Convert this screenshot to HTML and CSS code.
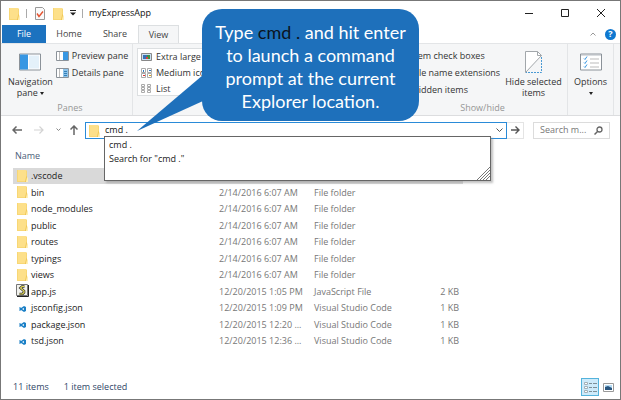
FILE: index.html
```html
<!DOCTYPE html>
<html lang="en">
<head>
<meta charset="utf-8">
<title>myExpressApp</title>
<link rel="stylesheet" href="styles.css">
</head>
<body>
<svg class="defs" aria-hidden="true">
  <symbol id="folder" viewBox="0 0 11 13">
    <path d="M0 1h9l1 1v11H0z" fill="#f8d775"/>
    <path d="M1 1h8v11H1z" fill="#fde08a"/>
    <path d="M9 8l1-1v6H8z" fill="#f0c552"/>
    <path d="M10 8l1 1v4h-2z" fill="#fff0b8"/>
  </symbol>
  <symbol id="code" viewBox="0 0 7 6">
    <path d="M5 0l2 1v4L5 6 2 4 1 5 0 4l1-1-1-1 1-1 1 1z" fill="#1c80c6"/>
    <path d="M5 2v2L3 3z" fill="#fff"/>
  </symbol>
</svg>
<div class="window">
  <header class="titlebar">
    <svg class="folder" aria-hidden="true"><use href="#folder"/></svg>
    <span class="rule"></span>
    <svg class="check" width="10" height="13" viewBox="0 0 10 13" aria-hidden="true"><path d="M.5.5h7l2 2v10h-9z" fill="#fafafa" stroke="#999"/><path d="M2 6.500l2 3 4-5" fill="none" stroke="#e55330" stroke-width="1.400"/></svg>
    <svg class="folder" aria-hidden="true"><use href="#folder"/></svg>
    <svg width="6" height="6" viewBox="0 0 6 6" aria-hidden="true"><path d="M0 0h6v1H0zM0 2.500h6L3 5.500z" fill="#222"/></svg>
    <span class="rule last"></span>
    <h1>myExpressApp</h1>
    <div class="controls">
      <button aria-label="Minimize"><svg width="8" height="8" viewBox="0 0 8 8"><path d="M0 4.500h8" stroke="#222"/></svg></button>
      <button aria-label="Maximize"><svg width="8" height="8" viewBox="0 0 8 8"><path d="M.5.5h7v7h-7z" fill="none" stroke="#222"/></svg></button>
      <button aria-label="Close"><svg width="8" height="8" viewBox="0 0 8 8"><path d="M0 0l8 8M8 0L0 8" stroke="#222"/></svg></button>
    </div>
  </header>
  <nav class="tabs">
    <button class="file">File</button>
    <button>Home</button>
    <button>Share</button>
    <button class="active">View</button>
    <svg class="collapse" width="6" height="4" viewBox="0 0 6 4" aria-hidden="true"><path d="M.5 3.500L3 1l2.500 2.500" fill="none" stroke="#999"/></svg>
    <button class="help" aria-label="Help">?</button>
  </nav>
  <section class="ribbon">
    <div class="group panes">
      <div class="tools">
        <button class="big"><svg width="22" height="17" viewBox="0 0 22 17" aria-hidden="true"><path d="M.5.5h21v16H.5z" fill="#fff" stroke="#8b9299"/><path d="M1 1h8v15H1z" fill="#3797e3"/><path d="M10 2h10v13H10z" fill="#e4f1fa"/></svg><span>Navigation<br>pane <i class="caret"></i></span></button>
        <div class="stack">
          <button><svg width="13" height="10" viewBox="0 0 13 10" aria-hidden="true"><path d="M.5.5h12v9H.5z" fill="#fff" stroke="#8b9299"/><path d="M3.500 1v8" stroke="#bbb"/><path d="M7 1h5v8H7z" fill="#3797e3"/></svg>Preview pane</button>
          <button><svg width="13" height="10" viewBox="0 0 13 10" aria-hidden="true"><path d="M.5.5h12v9H.5z" fill="#fff" stroke="#8b9299"/><path d="M3.500 1v8" stroke="#bbb"/><path d="M7 1h5v8H7z" fill="#8fc4ea"/><path d="M8 3.500h3M8 5.500h3M8 7.500h3" stroke="#3480b8"/></svg>Details pane</button>
        </div>
      </div>
      <div class="caption">Panes</div>
    </div>
    <div class="group layout">
      <div class="gallery">
        <button><svg width="13" height="10" viewBox="0 0 13 10" aria-hidden="true"><path d="M1.500 1.500h10v7h-10z" fill="#c9dff2" stroke="#888"/><path d="M3 3h4v4H3z" fill="#3a6fb5"/><path d="M7 3h3v4H7z" fill="#3d9141"/><path d="M6 5h2v2H6z" fill="#d9443c"/></svg>Extra large icons</button>
        <button><svg width="13" height="10" viewBox="0 0 13 10" aria-hidden="true"><path d="M1.500.5h4v4h-4zM7.500.5h4v4h-4zM1.500 5.500h4v4h-4zM7.500 5.500h4v4h-4z" fill="#fff" stroke="#aaa"/><path d="M3 2h1v2H3zM9 2h2v1H9z" fill="#3579bb"/><path d="M3 7h2v1H3z" fill="#d33"/><path d="M9 7h2v1H9z" fill="#d9a121"/></svg>Medium icons</button>
        <button><svg width="13" height="10" viewBox="0 0 13 10" aria-hidden="true"><path d="M1.500.5h3v2h-3zM1.500 3.500h3v2h-3zM1.500 6.500h3v2h-3zM7.500.5h3v2h-3zM7.500 3.500h3v2h-3zM7.500 6.500h3v2h-3z" fill="#fff" stroke="#aaa"/></svg>List</button>
      </div>
    </div>
    <div class="group show">
      <div class="tools">
        <div class="stack checks">
          <label><input type="checkbox">Item check boxes</label>
          <label><input type="checkbox">File name extensions</label>
          <label><input type="checkbox">Hidden items</label>
        </div>
        <button class="big"><svg width="18" height="22" viewBox="0 0 18 22" aria-hidden="true"><path d="M.5 21.500V.5h12l4 4z" fill="#fff"/><path d="M.5 21.500V.5h12l4 4L.5 21.500M12.500.5v4h4" fill="none" stroke="#a2a7ab"/><path d="M16.500 6v15.500H1" fill="none" stroke="#4a9ad4" stroke-dasharray="2 1"/></svg><span>Hide selected<br>items</span></button>
      </div>
      <div class="caption">Show/hide</div>
    </div>
    <div class="group options">
      <button class="big"><svg width="22" height="17" viewBox="0 0 22 17" aria-hidden="true"><path d="M.5.5h21v16H.5z" fill="#fff" stroke="#8b9299"/><path d="M1 1h20v1H1z" fill="#b5bbc0"/><path d="M4 5l1 1 2-3M4 9l1 1 2-3M4 13l1 1 2-3" fill="none" stroke="#3797e3"/><path d="M10 5.500h9M10 9.500h9M10 13.500h9" stroke="#bbb"/></svg><span>Options<br><i class="caret"></i></span></button>
    </div>
  </section>
  <div class="navigation">
    <button aria-label="Back"><svg width="10" height="8" viewBox="0 0 10 8"><path d="M10 4H1M4.500.5L1 4l3.500 3.500" fill="none" stroke="#666" stroke-width="1.500"/></svg></button>
    <button aria-label="Forward"><svg width="10" height="8" viewBox="0 0 10 8"><path d="M0 4h9M5.500.5L9 4 5.500 7.500" fill="none" stroke="#d3d3d3" stroke-width="1.200"/></svg></button>
    <button class="recent" aria-label="Recent"><svg width="5" height="4" viewBox="0 0 5 4"><path d="M.5.5l2 2 2-2" fill="none" stroke="#888"/></svg></button>
    <button aria-label="Up"><svg width="8" height="10" viewBox="0 0 8 10"><path d="M4 10V1M.5 4.500L4 1l3.500 3.500" fill="none" stroke="#666" stroke-width="1.500"/></svg></button>
    <div class="address">
      <svg class="folder" aria-hidden="true"><use href="#folder"/></svg>
      <input type="text" value="cmd ." aria-label="Address">
      <svg width="7" height="5" viewBox="0 0 7 5" aria-hidden="true"><path d="M.5.5l3 3 3-3" fill="none" stroke="#555"/></svg>
      <div class="suggestions">
        <a href="#">cmd .</a>
        <a href="#">Search for "cmd ."</a>
        <svg width="13" height="13" viewBox="0 0 13 13" aria-hidden="true"><path d="M0 13L13 0M3 13L13 3M6 13l7-7M9 13l4-4" stroke="#777"/></svg>
      </div>
    </div>
    <button class="go" aria-label="Go"><svg width="9" height="8" viewBox="0 0 9 8"><path d="M0 4h8M4.500.5L8 4 4.500 7.500" fill="none" stroke="#555" stroke-width="1.400"/></svg></button>
    <div class="search">
      <input type="text" placeholder="Search m..." aria-label="Search myExpressApp">
      <svg width="9" height="9" viewBox="0 0 9 9" aria-hidden="true"><circle cx="5.500" cy="3.500" r="2.500" fill="none" stroke="#666" stroke-width="1.300"/><path d="M4 5L.5 8.500" stroke="#666" stroke-width="1.500"/></svg>
    </div>
  </div>
  <main>
    <table>
      <colgroup><col class="name"><col class="date"><col class="type"><col class="size"></colgroup>
      <thead><tr><th colspan="4">Name</th></tr></thead>
      <tbody>
        <tr class="selected"><td><svg class="folder"><use href="#folder"/></svg>.vscode</td><td>2/14/2016 6:07 AM</td><td>File folder</td><td></td></tr>
        <tr><td><svg class="folder"><use href="#folder"/></svg>bin</td><td>2/14/2016 6:07 AM</td><td>File folder</td><td></td></tr>
        <tr><td><svg class="folder"><use href="#folder"/></svg>node_modules</td><td>2/14/2016 6:07 AM</td><td>File folder</td><td></td></tr>
        <tr><td><svg class="folder"><use href="#folder"/></svg>public</td><td>2/14/2016 6:07 AM</td><td>File folder</td><td></td></tr>
        <tr><td><svg class="folder"><use href="#folder"/></svg>routes</td><td>2/14/2016 6:07 AM</td><td>File folder</td><td></td></tr>
        <tr><td><svg class="folder"><use href="#folder"/></svg>typings</td><td>2/14/2016 6:07 AM</td><td>File folder</td><td></td></tr>
        <tr><td><svg class="folder"><use href="#folder"/></svg>views</td><td>2/14/2016 6:07 AM</td><td>File folder</td><td></td></tr>
        <tr><td><svg class="script" width="13" height="13" viewBox="0 0 13 13"><path d="M.5.5h11v11H.5z" fill="#f2f2ee" stroke="#777"/><path d="M12.500 1v11.500H1" fill="none" stroke="#222"/><path d="M8.500 2.500H6L4.500 4 8 7v1.500L6.500 10H3.500" fill="none" stroke="#333" stroke-width="2.600"/><path d="M8.500 2.500H6L4.500 4 8 7v1.500L6.500 10H3.500" fill="none" stroke="#e3d957" stroke-width="1.200"/></svg>app.js</td><td>12/20/2015 1:05 PM</td><td>JavaScript File</td><td>2 KB</td></tr>
        <tr><td><svg class="code"><use href="#code"/></svg>jsconfig.json</td><td>12/20/2015 1:09 PM</td><td>Visual Studio Code</td><td>1 KB</td></tr>
        <tr><td><svg class="code"><use href="#code"/></svg>package.json</td><td>12/20/2015 12:20 ...</td><td>Visual Studio Code</td><td>1 KB</td></tr>
        <tr><td><svg class="code"><use href="#code"/></svg>tsd.json</td><td>12/20/2015 12:36 ...</td><td>Visual Studio Code</td><td>1 KB</td></tr>
      </tbody>
    </table>
  </main>
  <footer>
    <span>11 items</span><span>1 item selected</span>
    <div class="modes">
      <button class="on" aria-label="Details view"><svg width="13" height="12" viewBox="0 0 13 12"><path d="M.5 1.500h3v2h-3zM.5 5.500h3v2h-3zM.5 9.500h3v2h-3z" fill="#fff" stroke="#a3b0b8"/><path d="M5 2.500h3M9 2.500h4M5 6.500h3M9 6.500h4M5 10.500h3M9 10.500h4" stroke="#7d8f98"/></svg></button>
      <button aria-label="Thumbnail view"><svg width="11" height="9" viewBox="0 0 11 9"><path d="M.5.5h10v8H.5z" fill="#fff" stroke="#999"/><path d="M2 2h7v5H2z" fill="#b5dcf5"/><path d="M2 4l3-1 4 2v2H2z" fill="#28567f"/></svg></button>
    </div>
  </footer>
  <aside class="callout">
    <svg width="66" height="56" viewBox="0 0 66 56" aria-hidden="true"><path d="M66 0v26L0 56z" fill="#1e70bb"/></svg>
    <p>Type <b>cmd .</b> and hit enter<br>to launch a command<br>prompt at the current<br>Explorer location.</p>
  </aside>
</div>
</body>
</html>
```

FILE: styles.css
```css
* { box-sizing: border-box; }

body {
  margin: 0;
  font: 9px/12px "Open Sans", "Noto Sans", sans-serif;
  color: #333;
}

button, input {
  font: inherit;
  color: inherit;
  border: 0;
  padding: 0;
  margin: 0;
  background: none;
}

button, .address, .search, .titlebar, .tabs, .navigation, footer, .controls, .modes {
  display: flex;
  align-items: center;
}

svg { flex: none; display: block; }
.defs { position: absolute; width: 0; height: 0; }
.folder { width: 11px; height: 13px; }

.window {
  position: relative;
  display: flex;
  flex-direction: column;
  min-height: 100vh;
  border: 1px solid #777;
  background: #fff;
}

.titlebar { height: 24px; padding-left: 8px; }
.rule { width: 1px; height: 9px; background: #aaa; margin: 0 8px 0 6px; }
.check { margin-right: 8px; }
.titlebar .folder + svg { margin-left: 6px; }
.rule.last { margin-right: 6px; }
h1 { margin: 0; font-size: 9px; font-weight: 400; color: #111; }
.controls { margin-left: auto; gap: 28px; padding-right: 15px; }

.tabs { height: 18px; padding-left: 1px; }
.tabs button { height: 18px; width: 46px; justify-content: center; color: #444; }
.tabs .file { width: 44px; background: #1c72bf; color: #fff; }
.tabs .active {
  width: 41px;
  background: #f5f6f7;
  border: 1px solid #dcdfe1;
  border-bottom: 0;
}
.tabs .collapse { margin-left: auto; }
.tabs .help {
  width: 11px;
  height: 11px;
  margin: 0 4px 0 9px;
  border-radius: 50%;
  background: #0f78d0;
  color: #fff;
  font-weight: 700;
}

.ribbon {
  display: flex;
  height: 73px;
  padding-right: 6px;
  background: #f5f6f7;
  border-top: 1px solid #e3e5e7;
  border-bottom: 1px solid #dcdddf;
}
.group {
  display: flex;
  flex-direction: column;
  justify-content: space-between;
  padding: 4px 0 1px;
}
.tools { display: flex; }
.panes { width: 132px; padding-left: 7px; border-right: 1px solid #e3e5e7; }
.layout { flex: 1; padding-left: 4px; }
.show { width: 170px; border-right: 1px solid #e3e5e7; }
.options { width: 46px; border-right: 1px solid #e3e5e7; align-items: center; }
.caption { text-align: center; color: #969696; }

.big { flex-direction: column; text-align: center; line-height: 11px; padding-top: 3px; }
.big svg { height: 22px; margin-bottom: 3px; }
.caret {
  display: inline-block;
  border: 2px solid transparent;
  border-top: 3px solid #222;
  border-bottom: 0;
  vertical-align: middle;
}
.stack { display: flex; flex-direction: column; gap: 5px; padding-top: 2px; }
.stack button { gap: 3px; white-space: nowrap; }
.panes .stack { margin-left: 3px; }
.checks label { display: flex; align-items: center; gap: 4px; white-space: nowrap; }
.checks input { width: 10px; height: 10px; }
.checks { width: 102px; }
.show .big { white-space: nowrap; flex: 1; }
.gallery {
  display: flex;
  flex-direction: column;
  gap: 4px;
  height: 48px;
  padding: 2px 2px;
  background: #fff;
  border: 1px solid #dcdfe1;
}
.gallery button { gap: 3px; white-space: nowrap; }

.navigation { height: 28px; padding: 0 10px 0 11px; }
.navigation > button { margin-right: 12px; }
.navigation .recent { margin-right: 9px; }
.navigation .recent + button { margin-right: 7px; }
.address {
  position: relative;
  flex: 1;
  height: 17px;
  padding: 0 3px;
  border: 1px solid #2a8bd8;
}
.address input { flex: 1; min-width: 0; margin-left: 5px; color: #111; }
.suggestions {
  position: absolute;
  top: 13px;
  left: 18px;
  right: 15px;
  height: 45px;
  padding: 1px 4px;
  background: #fff;
  border: 1px solid #666;
  box-shadow: 2px 2px 2px #8888;
}
.suggestions a { display: block; line-height: 14px; color: #222; text-decoration: none; }
.suggestions svg { position: absolute; right: 0; bottom: 0; }
.navigation .go {
  width: 17px;
  height: 17px;
  margin-right: 9px;
  justify-content: center;
  border: 1px solid #e4e4e4;
  border-left: 0;
}
.search { width: 77px; height: 17px; padding: 0 6px; border: 1px solid #dcdcdc; }
.search input { flex: 1; min-width: 0; }
.search svg { margin-left: 2px; }
.search input::placeholder { color: #777; opacity: 1; }

main { padding: 0 12px; flex: 1; }
table { width: 450px; border-collapse: collapse; table-layout: fixed; }
.name { width: 206px; }
.date { width: 95px; }
.type { width: 99px; }
th { height: 24px; padding: 0 2px; font-weight: 400; text-align: left; color: #4c607a; }
td { height: 16px; padding: 0; color: #777; white-space: nowrap; }
tr:nth-child(even) td { height: 17px; }
td:nth-child(1) { padding-left: 18px; color: #222; position: relative; }
td:nth-child(4) { text-align: right; padding-right: 4px; }
td svg { position: absolute; left: 4px; top: 1px; }
td .script { left: 3px; }
td .code { width: 7px; height: 6px; left: 6px; top: 6px; }
.selected { background: #d9d9d9; }
.address { z-index: 1; }

footer { height: 24px; padding: 0 3px 0 12px; color: #2f4668; }
footer span { margin-right: 15px; }
.modes { margin-left: auto; }
.modes button { width: 18px; height: 18px; justify-content: center; }
.modes .on { background: #cdeafa; border: 1px solid #54b3dc; }

.callout {
  position: absolute;
  z-index: 2;
  left: 201px;
  top: 8px;
  width: 217px;
  padding: 12px 0 8px;
  border-radius: 20px;
  background: #1e70bb;
  color: #fff;
  font: 18px/23px Lato, sans-serif;
  text-align: center;
}
.callout p { margin: 0; white-space: nowrap; }
.callout b { font-weight: 400; color: #0b1420; }
.callout svg { position: absolute; left: -65px; top: 66px; }
```
